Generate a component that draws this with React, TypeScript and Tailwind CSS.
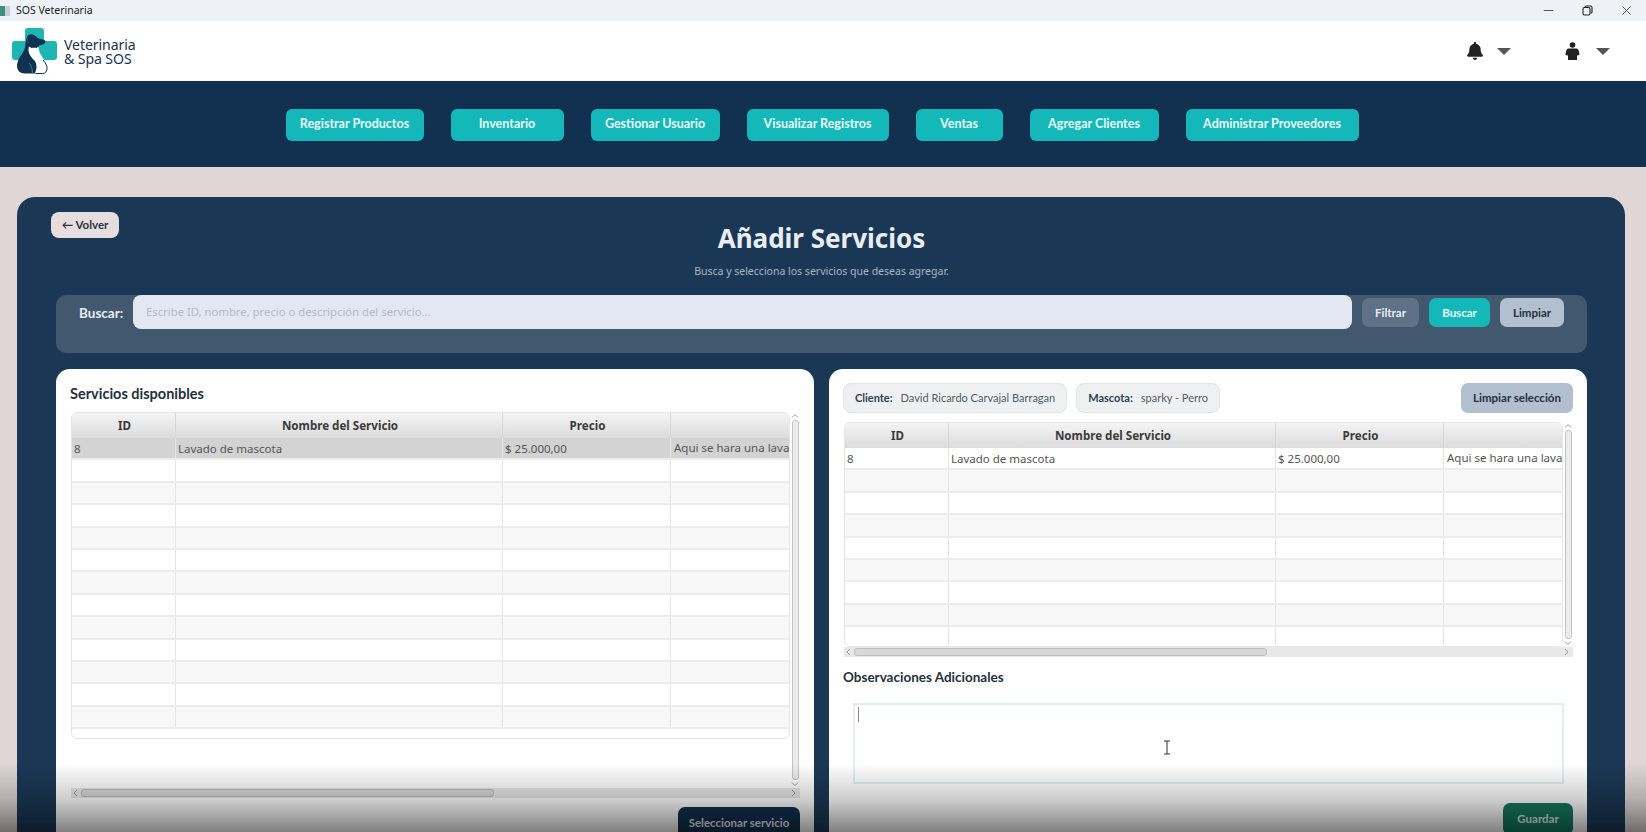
import { FaBell } from 'react-icons/fa'
import { Minus, X } from 'lucide-react'

const navItems = [
  { label: 'Registrar Productos', width: 'w-[138px]' },
  { label: 'Inventario', width: 'w-[113px]' },
  { label: 'Gestionar Usuario', width: 'w-[129px]' },
  { label: 'Visualizar Registros', width: 'w-[142px]' },
  { label: 'Ventas', width: 'w-[87px]' },
  { label: 'Agregar Clientes', width: 'w-[129px]' },
  { label: 'Administrar Proveedores', width: 'w-[173px]' },
]

function Logo() {
  return (
    <svg width="46" height="48" viewBox="0 0 46 48" className="shrink-0">
      <rect x="13" y="1" width="19" height="34" rx="3" fill="#1fb5b3" />
      <rect x="0" y="14" width="45" height="19" rx="3" fill="#1fb5b3" />
      <path
        d="M15 10C16 7 19 6.5 22 8L26 11C28 12.5 33 12 33.5 14.5C33.5 17 30 18 27 18.5C26 21 27 24 28 27L24 46.5L13 46.5C6 46.5 4 41 5.5 35.5C7 29.5 12 26 13 20C13.5 16 14 13 15 10Z"
        fill="#12304f"
      />
      <path
        d="M16.5 22L17 19.5L19.5 21C21 20.5 23 20.5 24.5 21L26.5 19.5L27 23C27.5 26 29 28 31 31C33.5 34.5 35.5 38 35 42C34.7 45 33 46 31 46L23 46C25 42 25 38 23 34C19.5 31 16 26 16.5 22Z"
        fill="#ffffff"
      />
      <path d="M31 33C33.5 36 35.5 39 35 42C34.7 45 33 46.5 30.5 46.5L24 46.5" stroke="#12304f" strokeWidth="1" fill="none" />
      <path d="M17 36C19 38 20.5 42 20.5 46" stroke="#1fb5b3" strokeWidth="0.7" fill="none" />
      <path d="M16 10C15 12 15.5 15 17 16" stroke="#2a6a80" strokeWidth="0.6" fill="none" />
    </svg>
  )
}

function Caret() {
  return (
    <svg width="14" height="7" viewBox="0 0 14 7">
      <path d="M0 0H14L7 7Z" fill="#555555" />
    </svg>
  )
}

function PersonIcon() {
  return (
    <svg width="15" height="18" viewBox="0 0 15 18">
      <circle cx="7.5" cy="3" r="2.8" fill="#222222" />
      <path d="M3.5 6.5H11.5C13.5 7 14 8.5 14.5 13L12 13.5V18H3V13.5L0.5 13C1 8.5 1.5 7 3.5 6.5Z" fill="#222222" />
    </svg>
  )
}

function TitleBar() {
  return (
    <div className="flex h-[21px] shrink-0 items-center bg-[#eef1f6] text-[#222222]">
      <div className="flex h-[10px] w-[10px] shrink-0 overflow-hidden">
        <span className="w-[5px] bg-[#3f8f80]" />
        <span className="w-[5px] bg-[#c9ced6]" />
      </div>
      <span className="ml-[6px] text-[10.5px]">SOS Veterinaria</span>
      <div className="ml-auto flex items-center gap-[26px] pr-[12px]">
        <Minus size={15} strokeWidth={1.2} />
        <svg width="11" height="11" viewBox="0 0 11 11" fill="none" stroke="#222222" strokeWidth="1.1">
          <rect x="1" y="2.5" width="7" height="7.5" rx="1.5" />
          <path d="M3 2.5V2C3 1.3 3.5 1 4.2 1H8.5C9.4 1 10 1.6 10 2.5V7C10 7.6 9.6 8 9 8" />
        </svg>
        <X size={15} strokeWidth={1.1} />
      </div>
    </div>
  )
}

function Header() {
  return (
    <header className="flex h-[60px] shrink-0 items-center bg-white pl-[12px]">
      <Logo />
      <div className="ml-[6px] mt-[2px] text-[14.1px] leading-[14px] tracking-[-0.1px] text-[#1b3350]">
        <div>Veterinaria</div>
        <div>&amp; Spa SOS</div>
      </div>
      <div className="ml-auto flex items-center pr-[36px]">
        <FaBell size={18} className="text-[#222222]" />
        <span className="ml-[13px] mr-[54px]">
          <Caret />
        </span>
        <PersonIcon />
        <span className="ml-[16px]">
          <Caret />
        </span>
      </div>
    </header>
  )
}

function NavBar() {
  return (
    <nav className="flex h-[86px] shrink-0 items-center justify-center gap-[27px] bg-[#12304f] pr-[2px] pt-[1px]">
      {navItems.map((item) => (
        <button
          key={item.label}
          className={`h-[32px] rounded-[6px] bg-[#14b8b8] font-['Lato',sans-serif] text-[12.5px] font-bold text-[#e9fbfb] ${item.width}`}
        >
          {item.label}
        </button>
      ))}
    </nav>
  )
}

type TableProps = {
  rows: number
  bodyHeight: string
  selected?: boolean
  cols: string
  scrollHeight: string
}

function ServiceTable({ rows, bodyHeight, selected, cols, scrollHeight }: TableProps) {
  const cell = 'flex items-center overflow-hidden whitespace-nowrap border-r border-[#e6e6e6] pl-[2px]'
  const head = 'flex items-center justify-center border-r border-[#d8d8d8] pl-[2px]'

  return (
    <div className={`flex flex-col ${scrollHeight}`}>
      <div className="flex min-h-0 flex-1">
        <div className="min-w-0 flex-1">
          <div className={`overflow-hidden rounded-[6px] border border-[#e6e6e6] text-[11.5px] text-[#555555] ${bodyHeight}`}>
            <div className={`grid h-[25px] bg-gradient-to-b from-[#f4f4f4] to-[#dcdcdc] text-[11.6px] font-bold text-[#3a3a3a] ${cols}`}>
              <div className={head}>ID</div>
              <div className={head}>Nombre del Servicio</div>
              <div className={head}>Precio</div>
              <div />
            </div>
            {Array.from({ length: rows }).map((_, i) => {
              const first = i === 0
              let rowBg = i % 2 === 1 ? 'bg-[#f8f8f8]' : 'bg-white'
              if (selected) rowBg = first ? 'bg-[#d3d3d3]' : i % 2 === 1 ? 'bg-white' : 'bg-[#f8f8f8]'
              return (
                <div key={i} className={`grid h-[22.4px] border-b-2 border-[#ececec] ${cols} ${rowBg}`}>
                  <div className={cell}>{first ? '8' : ''}</div>
                  <div className={cell}>{first ? 'Lavado de mascota' : ''}</div>
                  <div className={cell}>{first ? '$ 25.000,00' : ''}</div>
                  <div className="min-w-0 overflow-hidden whitespace-nowrap pl-[3px] leading-[20px]">
                    {first ? 'Aqui se hara una lava' : ''}
                  </div>
                </div>
              )
            })}
          </div>
        </div>
        <div className="flex w-[10px] shrink-0 flex-col items-center text-[#9a9a9a]">
          <svg width="8" height="6" viewBox="0 0 8 6" className="my-[1px] shrink-0" fill="none" stroke="currentColor">
            <path d="M1 4.5L4 1.5L7 4.5" />
          </svg>
          <div className="w-[7px] flex-1 rounded-[3px] border border-[#c4c4c4] bg-[#ececec]" />
          <svg width="8" height="6" viewBox="0 0 8 6" className="my-[1px] shrink-0" fill="none" stroke="currentColor">
            <path d="M1 1.5L4 4.5L7 1.5" />
          </svg>
        </div>
      </div>
      <div className="flex h-[10px] shrink-0 items-center bg-[#e8e8e8] text-[#9a9a9a]">
        <svg width="10" height="8" viewBox="0 0 10 8" className="shrink-0" fill="none" stroke="currentColor">
          <path d="M6 1L3 4L6 7" />
        </svg>
        <div className="h-[8px] w-[413px] rounded-[3px] border border-[#bdbdbd] bg-[#d9d9d9]" />
        <svg width="10" height="8" viewBox="0 0 10 8" className="ml-auto mr-[2px] shrink-0" fill="none" stroke="currentColor">
          <path d="M4 1L7 4L4 7" />
        </svg>
      </div>
    </div>
  )
}

function Chip({ label, value }: { label: string; value: string }) {
  return (
    <div className="flex h-[30px] items-center gap-[8px] rounded-[8px] border border-[#e2e4e6] bg-[#eff0f1] px-[11px] font-['Lato',sans-serif] text-[11px]">
      <span className="font-bold text-[#33404f]">{label}</span>
      <span className="text-[#555c64]">{value}</span>
    </div>
  )
}

function LeftCard() {
  return (
    <section className="flex h-[480px] w-[758px] shrink-0 flex-col rounded-t-[14px] bg-white px-[14px] pt-[16px]">
      <h2 className="font-['Lato',sans-serif] text-[14.5px] font-bold leading-[18px] text-[#25303c]">Servicios disponibles</h2>
      <div className="ml-[1px] mt-[9px]">
        <ServiceTable
          rows={13}
          selected
          bodyHeight="h-[327px]"
          cols="grid-cols-[104px_327px_168px_1fr]"
          scrollHeight="h-[386px]"
        />
      </div>
      <div className="mt-[9px] flex justify-end">
        <button className="h-[32px] w-[122px] rounded-[7px] bg-[#12304f] font-['Lato',sans-serif] text-[11.5px] font-bold text-[#dfe6ec]">
          Seleccionar servicio
        </button>
      </div>
    </section>
  )
}

function RightCard() {
  return (
    <section className="flex h-[480px] min-w-0 flex-1 flex-col rounded-t-[14px] bg-white pl-[14px] pr-[14px] pt-[14px]">
      <div className="flex items-center gap-[9px]">
        <Chip label="Cliente:" value="David Ricardo Carvajal Barragan" />
        <Chip label="Mascota:" value="sparky - Perro" />
        <button className="ml-auto h-[30px] w-[112px] rounded-[7px] bg-[#b2bfcf] font-['Lato',sans-serif] text-[11.5px] font-bold text-[#25303c]">
          Limpiar selección
        </button>
      </div>
      <div className="ml-[1px] mt-[9px]">
        <ServiceTable
          rows={9}
          bodyHeight="h-[225px]"
          cols="grid-cols-[104px_327px_168px_1fr]"
          scrollHeight="h-[235px]"
        />
      </div>
      <h3 className="mt-[11px] font-['Lato',sans-serif] text-[13.5px] font-bold leading-[18px] text-[#25303c]">
        Observaciones Adicionales
      </h3>
      <div className="relative ml-[10px] mr-[9px] mt-[17px] h-[81px] border-2 border-[#e0efee] bg-white">
        <span className="absolute left-[3px] top-[2px] h-[15px] w-px bg-[#888888]" />
        <svg width="8" height="15" viewBox="0 0 8 15" className="absolute left-[308px] top-[35px]" fill="none" stroke="#333333">
          <path d="M1 1H7M4 1V14M1 14H7" />
        </svg>
      </div>
      <div className="mt-[19px] flex justify-end">
        <button className="h-[32px] w-[70px] rounded-[7px] bg-[#167a5e] font-['Lato',sans-serif] text-[11.5px] font-bold text-[#d8efe7]">
          Guardar
        </button>
      </div>
    </section>
  )
}

export default function App() {
  return (
    <div className="relative flex h-[832px] flex-col overflow-hidden bg-[#e0d6d6] font-['Noto_Sans',sans-serif]">
      <TitleBar />
      <Header />
      <NavBar />
      <main className="min-h-0 flex-1 pl-[17px] pr-[21px] pt-[30px]">
        <div className="h-[700px] rounded-t-[18px] bg-[#1a3855] pl-[39px] pr-[38px] pt-[14px]">
          <div className="grid h-[84px] grid-cols-[1fr_auto_1fr]">
            <div>
              <button className="ml-[-5px] h-[26px] w-[68px] rounded-[8px] bg-[#e6dede] font-['Lato',sans-serif] text-[11.5px] font-bold text-[#2a3440]">
                ← Volver
              </button>
            </div>
            <div className="flex flex-col items-center">
              <h1 className="mt-[10px] text-[26px] font-bold leading-[34px] text-[#e8eef3]">Añadir Servicios</h1>
              <p className="mt-[9px] text-[10.5px] leading-[14px] text-[#a6b6c6]">
                Busca y selecciona los servicios que deseas agregar.
              </p>
            </div>
          </div>

          <div className="flex h-[58px] items-start rounded-[10px] bg-[#41586e]">
            <span className="ml-[23px] mt-[8px] w-[54px] font-['Lato',sans-serif] text-[13.5px] font-bold text-[#e8eef3]">Buscar:</span>
            <div className="flex h-[34px] min-w-0 flex-1 items-center rounded-[8px] bg-[#e2e8f1] pl-[13px] text-[11.3px] text-[#b3bbc6]">
              Escribe ID, nombre, precio o descripción del servicio...
            </div>
            <div className="ml-[10px] mr-[23px] mt-[3px] flex gap-[10px] font-['Lato',sans-serif] text-[11.5px] font-bold">
              <button className="h-[29px] w-[57px] rounded-[7px] bg-[#5e7186] text-[#e8eef3]">Filtrar</button>
              <button className="h-[29px] w-[61px] rounded-[7px] bg-[#14b8b8] text-[#e9fbfb]">Buscar</button>
              <button className="h-[29px] w-[64px] rounded-[7px] bg-[#b2bfcf] text-[#25303c]">Limpiar</button>
            </div>
          </div>

          <div className="mt-[16px] flex gap-[15px]">
            <LeftCard />
            <RightCard />
          </div>
        </div>
      </main>
      <div className="pointer-events-none absolute inset-x-0 bottom-0 h-[69px] bg-gradient-to-b from-black/0 via-black/20 via-54% to-black/50" />
    </div>
  )
}
